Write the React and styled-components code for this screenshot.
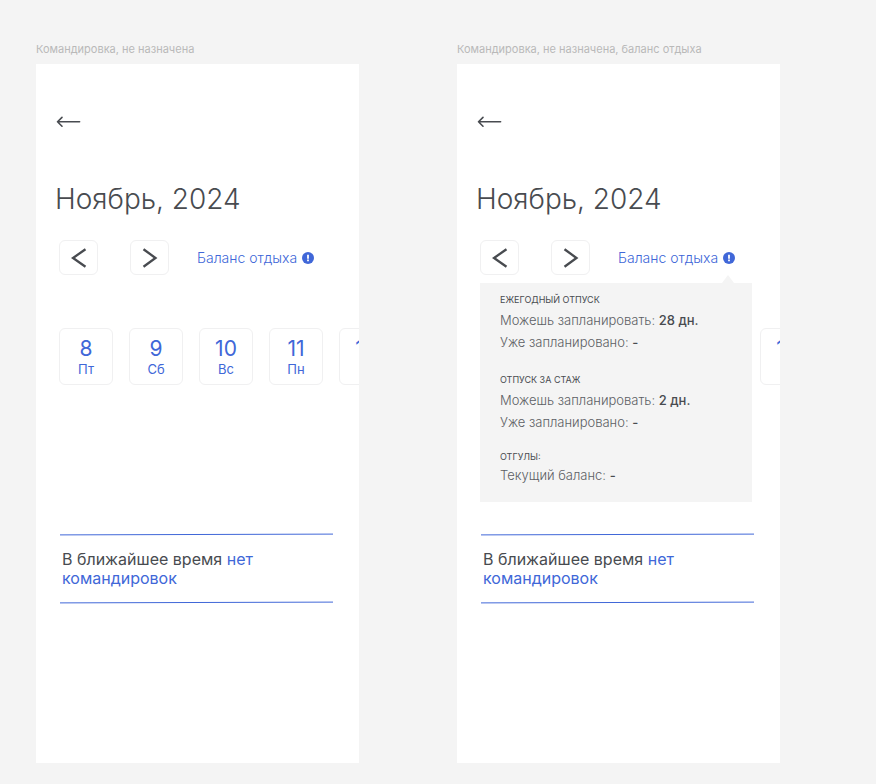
import React from "react";
import styled, { createGlobalStyle } from "styled-components";

const ink = "#484b50";
const muted = "#5c5f64";
const blue = "#4067d8";
const panel = "#f4f4f4";
const outline = "#f0f0f1";

const GlobalStyle = createGlobalStyle`
  *, *::before, *::after { box-sizing: border-box; }
  body { margin: 0; background: ${panel}; font-family: Inter, "Liberation Sans", sans-serif; color: ${ink}; }
  h1, h2, h3, p, ul { margin: 0; padding: 0; }
  button { font: inherit; color: inherit; cursor: pointer; }
`;

const Board = styled.main`
  display: grid;
  grid-template-columns: repeat(2, minmax(0, 1fr));
  gap: 98px;
  min-height: 100vh;
  padding: 42px 96px 21px 36px;
`;

const Artboard = styled.section`
  display: flex;
  flex-direction: column;
`;

const ArtboardLabel = styled.h2`
  height: 22px;
  font-size: 11px;
  line-height: 14px;
  font-weight: 400;
  color: #b9b9b9;
  white-space: nowrap;
`;

const Screen = styled.div`
  flex: 1;
  padding: 48px 24px 150px 23px;
  background: #fff;
  overflow: hidden;
`;

const BackButton = styled.button`
  display: flex;
  margin-left: -5px;
  padding: 2px;
  border: 0;
  background: none;
`;

const Month = styled.h1`
  margin: 49px 0 0 -4px;
  font-size: 28px;
  line-height: 36px;
  font-weight: 300;
`;

const Toolbar = styled.div`
  position: relative;
  display: flex;
  align-items: center;
  margin-top: 23px;
`;

const StepButton = styled.button`
  display: flex;
  align-items: center;
  justify-content: center;
  width: 39px;
  height: 35px;
  margin-right: 32px;
  padding: 0;
  border: 1px solid ${outline};
  border-radius: 6px;
  background: #fff;
`;

const BalanceButton = styled.button`
  display: flex;
  align-items: center;
  gap: 5px;
  margin-left: -4px;
  padding: 0;
  border: 0;
  background: none;
  && { color: ${blue}; }
  font-size: 14px;
  line-height: 20px;
  font-weight: 300;
  white-space: nowrap;
`;

const Tooltip = styled.div`
  position: absolute;
  top: 100%;
  left: 0;
  right: 4px;
  z-index: 1;
  margin-top: 8px;
  padding: 10px 20px 16px;
  background: ${panel};

  &::before {
    content: "";
    position: absolute;
    right: 18px;
    bottom: 100%;
    border: solid transparent;
    border-width: 0 6px 8px;
    border-bottom-color: ${panel};
  }
`;

const BalanceGroup = styled.section`
  & + & { margin-top: 20px; }
  & + &:last-child { margin-top: 17px; }
`;

const GroupTitle = styled.h3`
  margin-bottom: ${(p) => (p.$compact ? 0 : 2)}px;
  font-size: 9px;
  line-height: 14px;
  font-weight: 400;
  text-transform: uppercase;
`;

const BalanceRow = styled.p`
  color: ${muted};
  font-size: 13px;
  line-height: 22px;
  font-weight: 300;

  strong { font-weight: 500; color: ${ink}; }
`;

const Days = styled.ul`
  display: flex;
  gap: 16px;
  margin-top: 53px;
  list-style: none;
`;

const Day = styled.button`
  display: flex;
  flex-direction: column;
  align-items: center;
  width: 54px;
  height: 57px;
  padding: 7px 0 0;
  border: 1px solid ${outline};
  border-radius: 6px;
  background: #fff;
  && { color: ${blue}; }
`;

const DayNumber = styled.span`
  font-size: 21px;
  line-height: 25px;
`;

const DayName = styled.span`
  font-size: 13px;
  line-height: 16px;
`;

const Notice = styled.section`
  margin: 148px 2px 0 1px;
`;

const NoticeText = styled.p`
  padding: 14px 2px 13px;
  font-size: 16px;
  line-height: 19px;

  em { font-style: normal; color: ${blue}; }
`;

const Rule = styled.svg`
  display: block;
  width: 100%;
  height: 3px;
`;

const balances = [
  { title: "Ежегодный отпуск", rows: [["Можешь запланировать:", "28 дн."], ["Уже запланировано:", "-"]] },
  { title: "Отпуск за стаж", rows: [["Можешь запланировать:", "2 дн."], ["Уже запланировано:", "-"]] },
  { title: "Отгулы:", rows: [["Текущий баланс:", "-"]] },
];

const days = [[8, "Пт"], [9, "Сб"], [10, "Вс"], [11, "Пн"], [12, "Вт"]];

function BackArrow() {
  return (
    <svg width="26" height="16" viewBox="0 0 26 16" fill="none" stroke={ink} strokeWidth="1.6" strokeLinecap="round" strokeLinejoin="round" aria-hidden="true">
      <path d="M23.6 7.8H1.5M6 3.4 1.5 7.8l4.5 4.4" />
    </svg>
  );
}

function Chevron({ next }) {
  return (
    <svg width="16" height="20" viewBox="0 0 16 20" fill="none" stroke={ink} strokeWidth="2.3" aria-hidden="true">
      <path d={next ? "M1.5 1.2 13.5 10 1.5 18.8" : "M14.5 1.2 2 10l12.5 8.8"} />
    </svg>
  );
}

function InfoMark() {
  return (
    <svg width="12" height="12" viewBox="0 0 12 12" aria-hidden="true">
      <circle cx="6" cy="6" r="6" fill={blue} />
      <path d="M6 2.8v4M6 7.6v1.7" stroke="#fff" strokeWidth="1.8" />
    </svg>
  );
}

function Divider() {
  return (
    <Rule viewBox="0 0 273 3" preserveAspectRatio="none" aria-hidden="true">
      <path d="M0 1.9 273 1.1" stroke={blue} strokeWidth="1" />
    </Rule>
  );
}

function TripScreen({ label, open }) {
  return (
    <Artboard>
      <ArtboardLabel>{label}</ArtboardLabel>
      <Screen>
        <BackButton type="button" aria-label="Назад"><BackArrow /></BackButton>
        <Month>Ноябрь, 2024</Month>
        <Toolbar>
          <StepButton type="button" aria-label="Предыдущие дни"><Chevron /></StepButton>
          <StepButton type="button" aria-label="Следующие дни"><Chevron next /></StepButton>
          <BalanceButton type="button" aria-expanded={open}>Баланс отдыха<InfoMark /></BalanceButton>
          {open && (
            <Tooltip role="tooltip">
              {balances.map((group) => (
                <BalanceGroup key={group.title}>
                  <GroupTitle $compact={group.rows.length === 1}>{group.title}</GroupTitle>
                  {group.rows.map(([name, value]) => (
                    <BalanceRow key={name}>{name} <strong>{value}</strong></BalanceRow>
                  ))}
                </BalanceGroup>
              ))}
            </Tooltip>
          )}
        </Toolbar>
        <Days>
          {days.map(([number, name]) => (
            <li key={number}>
              <Day type="button"><DayNumber>{number}</DayNumber><DayName>{name}</DayName></Day>
            </li>
          ))}
        </Days>
        <Notice>
          <Divider />
          <NoticeText>В ближайшее время <em>нет командировок</em></NoticeText>
          <Divider />
        </Notice>
      </Screen>
    </Artboard>
  );
}

export default function App() {
  return (
    <>
      <GlobalStyle />
      <Board>
        <TripScreen label="Командировка, не назначена" open={false} />
        <TripScreen label="Командировка, не назначена, баланс отдыха" open />
      </Board>
    </>
  );
}
